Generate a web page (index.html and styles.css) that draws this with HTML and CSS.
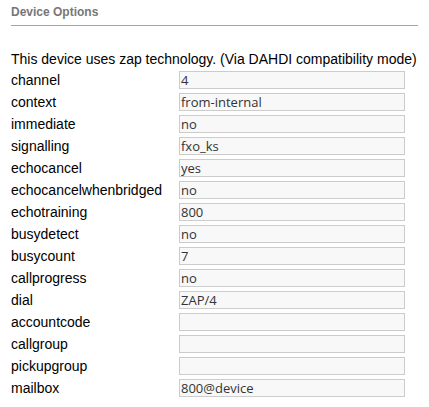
FILE: index.html
```html
<!DOCTYPE html>
<html>
<head>
<meta charset="utf-8">
<link rel="stylesheet" href="styles.css">
</head>
<body>
<div class="panel">
  <h2 class="title">Device Options</h2>
  <p class="intro">This device uses zap technology. (Via DAHDI compatibility mode)</p>
  <div class="form">
    <div class="row"><span class="label">channel</span><input class="field" value="4"></div>
    <div class="row"><span class="label">context</span><input class="field" value="from-internal"></div>
    <div class="row"><span class="label">immediate</span><input class="field" value="no"></div>
    <div class="row"><span class="label">signalling</span><input class="field" value="fxo_ks"></div>
    <div class="row"><span class="label">echocancel</span><input class="field" value="yes"></div>
    <div class="row"><span class="label">echocancelwhenbridged</span><input class="field" value="no"></div>
    <div class="row"><span class="label">echotraining</span><input class="field" value="800"></div>
    <div class="row"><span class="label">busydetect</span><input class="field" value="no"></div>
    <div class="row"><span class="label">busycount</span><input class="field" value="7"></div>
    <div class="row"><span class="label">callprogress</span><input class="field" value="no"></div>
    <div class="row"><span class="label">dial</span><input class="field" value="ZAP/4"></div>
    <div class="row"><span class="label">accountcode</span><input class="field" value=""></div>
    <div class="row"><span class="label">callgroup</span><input class="field" value=""></div>
    <div class="row"><span class="label">pickupgroup</span><input class="field" value=""></div>
    <div class="row"><span class="label">mailbox</span><input class="field" value="800@device"></div>
  </div>
</div>
</body>
</html>
```
FILE: styles.css
```css
html, body {
  margin: 0;
  padding: 0;
  background: #fff;
}
.panel {
  padding: 5px 11px 0 11px;
  width: 407px;
  font-family: "Liberation Sans", Arial, sans-serif;
}
.title {
  margin: 0;
  font-size: 12px;
  font-weight: bold;
  color: #777;
  line-height: 14px;
  padding-bottom: 6px;
  border-bottom: 1px solid #a4a79c;
}
.intro {
  margin: 24px 0 0 0;
  font-size: 14px;
  line-height: 18px;
  color: #000;
}
.form {
  display: flex;
  flex-direction: column;
  margin-top: 1px;
}
.row {
  display: flex;
  align-items: center;
  height: 22px;
}
.label {
  width: 168px;
  font-size: 14px;
  color: #000;
}
.field {
  box-sizing: border-box;
  width: 226px;
  height: 18px;
  margin: 0;
  padding: 0 1px;
  border: 1px solid #ccc;
  background: #f8f8f8;
  font-family: "Open Sans", "DejaVu Sans", sans-serif;
  font-size: 13px;
  color: #333;
  outline: none;
}
```
